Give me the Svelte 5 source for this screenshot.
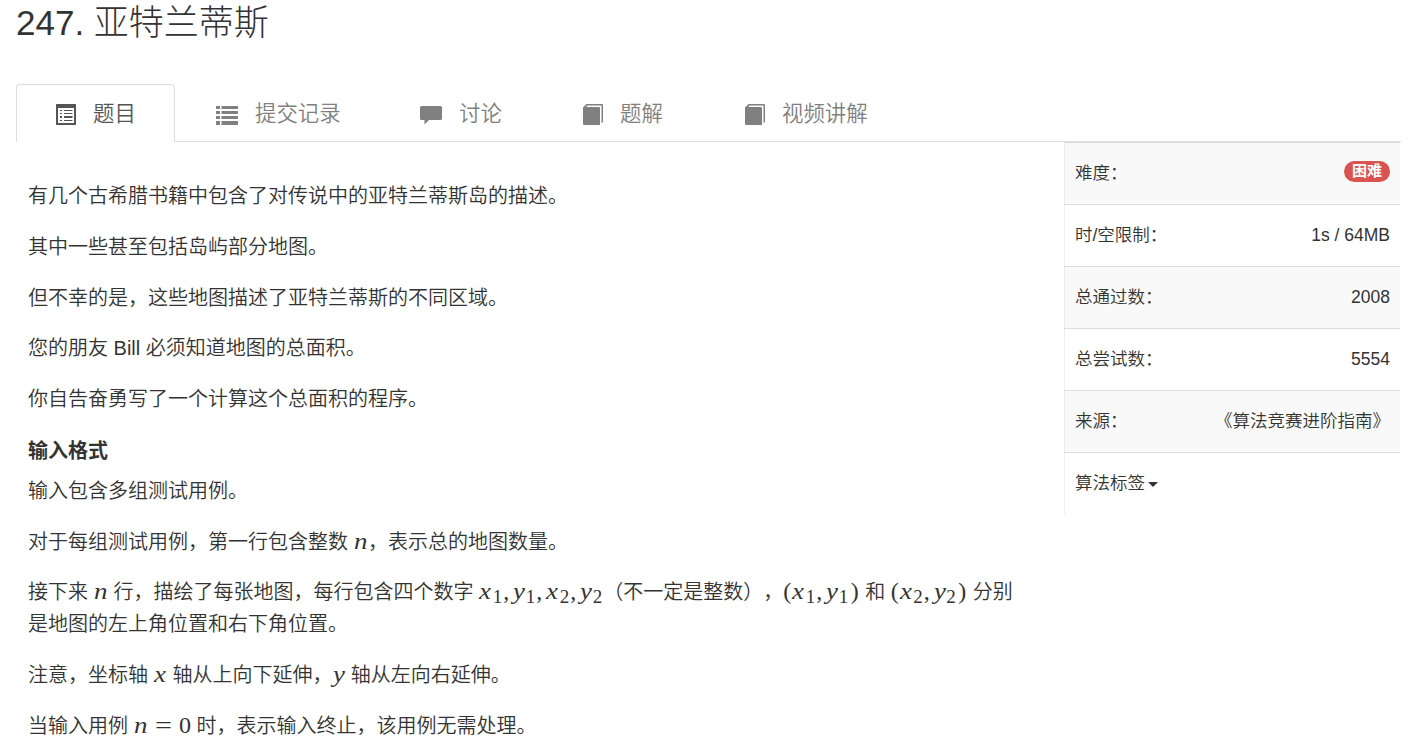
<script>
    const tabs = [
        { name: '题目', icon: 'list-alt', active: true },
        { name: '提交记录', icon: 'list' },
        { name: '讨论', icon: 'comment' },
        { name: '题解', icon: 'book' },
        { name: '视频讲解', icon: 'book' },
    ];

    const info = [
        { label: '难度：', badge: '困难' },
        { label: '时/空限制：', value: '1s / 64MB' },
        { label: '总通过数：', value: '2008' },
        { label: '总尝试数：', value: '5554' },
        { label: '来源：', value: '《算法竞赛进阶指南》' },
    ];
</script>

{#snippet pair(i)}<i class="x">x</i><sub>{i}</sub><span class="sep">,</span><i class="y">y</i><sub>{i}</sub>{/snippet}

<div class="page">
    <h1>247. 亚特兰蒂斯</h1>

    <ul class="nav-tabs">
        {#each tabs as tab}
            <li class={tab.icon} class:active={tab.active}>
                <a href="#top">
                    <svg width="22" height="22" viewBox="0 0 22 22" fill="currentColor">
                        {#if tab.icon === 'list-alt'}
                            <path fill-rule="evenodd" d="M.5 0h19q.5 0 .5.500v20q0 .5-.5.500H.5q-.5 0-.5-.500V.5Q0 0 .5 0zM2 4v15h16V4z" />
                            <path d="M4 6h2v1H4zM8 6h8.500v1H8zM4 9h2v1H4zM8 9h8.500v1H8zM4 12h2v2H4zM8 12h8.500v2H8zM4 16h2v1H4zM8 16h8.500v1H8z" />
                        {:else if tab.icon === 'list'}
                            <path d="M0 2h4v3H0zM5.500 2H22v3H5.500zM0 7h4v3H0zM5.500 7H22v3H5.500zM0 12h4v3H0zM5.500 12H22v3H5.500zM0 17h4v4H0zM5.500 17H22v4H5.500z" />
                        {:else if tab.icon === 'comment'}
                            <path d="M1.500 2h19q1.500 0 1.500 1.500v11q0 1.500-1.500 1.500H9l-4.500 4.500V16h-3Q0 16 0 14.500v-11Q0 2 1.500 2z" />
                        {:else}
                            <path d="M3.500 0H19q1 0 1 1v17l-1.500 1V1.500H4.500L3 3h13q1 0 1 1v17H1q-1 0-1-1V3.500z" />
                        {/if}
                    </svg>
                    <span>{tab.name}</span>
                </a>
            </li>
        {/each}
    </ul>

    <div class="row">
        <div class="content">
            <p>有几个古希腊书籍中包含了对传说中的亚特兰蒂斯岛的描述。</p>
            <p>其中一些甚至包括岛屿部分地图。</p>
            <p>但不幸的是，这些地图描述了亚特兰蒂斯的不同区域。</p>
            <p>您的朋友 Bill 必须知道地图的总面积。</p>
            <p>你自告奋勇写了一个计算这个总面积的程序。</p>
            <h4>输入格式</h4>
            <p>输入包含多组测试用例。</p>
            <p>对于每组测试用例，第一行包含整数 <span class="math"><i class="n">n</i></span>，表示总的地图数量。</p>
            <p>接下来 <span class="math"><i class="n">n</i></span> 行，描绘了每张地图，每行包含四个数字 <span class="math">{@render pair(1)}<span class="sep">,</span>{@render pair(2)}</span>（不一定是整数），<span class="math"><b>(</b>{@render pair(1)}<b class="close">)</b></span> 和 <span class="math"><b>(</b>{@render pair(2)}<b class="close">)</b></span> 分别<br>是地图的左上角位置和右下角位置。</p>
            <p>注意，坐标轴 <span class="math"><i class="x">x</i></span> 轴从上向下延伸，<span class="math"><i class="y">y</i></span> 轴从左向右延伸。</p>
            <p>当输入用例 <span class="math"><i class="n">n</i><span class="eq">=</span>0</span> 时，表示输入终止，该用例无需处理。</p>
        </div>

        <table>
            <tbody>
                {#each info as item}
                    <tr>
                        <td>{item.label}</td>
                        <td class="right">
                            {#if item.badge}
                                <span class="badge">{item.badge}</span>
                            {:else}
                                {item.value}
                            {/if}
                        </td>
                    </tr>
                {/each}
                <tr>
                    <td colspan="2">算法标签<span class="caret"></span></td>
                </tr>
            </tbody>
        </table>
    </div>
</div>

<style>
    :global(body) {
        margin: 0;
        background: #fff;
        overflow: hidden;
    }

    .page {
        height: 743px;
        padding: 0 16px;
        box-sizing: border-box;
        overflow: hidden;
        color: #333;
        font-family: "Liberation Sans", "Noto Sans CJK SC", sans-serif;
        font-weight: 350;
        text-spacing-trim: space-all;
    }

    h1 {
        margin: 0;
        height: 84px;
        line-height: 45px;
        font-size: 35px;
        font-weight: 300;
    }

    .nav-tabs {
        display: flex;
        height: 57px;
        margin: 0;
        padding: 0;
        list-style: none;
        border-bottom: 1px solid #ddd;
    }

    li {
        box-sizing: border-box;
        height: 58px;
        margin-right: 2px;
        padding-left: 39px;
        border: 1px solid transparent;
        border-bottom: 0;
        border-radius: 4px 4px 0 0;
    }
    li.active {
        width: 159px;
        background: #fff;
        border-color: #ddd;
    }
    li.list {
        width: 203px;
        padding-left: 38px;
    }
    li.comment {
        width: 160px;
        padding-left: 37px;
    }
    li.book {
        width: 160px;
        padding-left: 38px;
    }
    li.book:last-child {
        width: 204px;
    }

    a {
        display: flex;
        align-items: flex-start;
        color: #808080;
        font-size: 21.4px;
        line-height: 58px;
        text-decoration: none;
        white-space: nowrap;
    }
    .active a {
        color: #555;
    }
    a svg {
        flex: none;
        margin: 19px 17px 0 0;
    }
    .list-alt svg,
    .book svg {
        margin-right: 15px;
    }

    .row {
        display: flex;
        justify-content: space-between;
    }

    .content {
        width: 1030px;
        padding: 38px 0 0 12px;
        font-size: 20px;
        white-space: nowrap;
    }

    p {
        margin: 0 0 18.75px;
        line-height: 32px;
    }

    h4 {
        margin: 0 0 8px;
        padding-top: 2px;
        font-size: 20px;
        line-height: 31px;
        font-weight: bold;
    }

    .math {
        display: inline-flex;
        align-items: baseline;
        height: 24px;
        line-height: 24px;
        font-family: "Liberation Serif", serif;
        font-size: 24px;
        font-weight: 400;
    }
    .n,
    .x,
    .y {
        transform: scaleX(1.12);
        transform-origin: left;
    }
    .n {
        width: 14.5px;
    }
    .x {
        width: 13.5px;
    }
    .y {
        width: 12.5px;
    }
    sub {
        width: 10.5px;
        font-size: 19px;
        line-height: 1;
        transform: translateY(4px);
        vertical-align: baseline;
    }
    .sep {
        width: 10px;
    }
    .eq {
        width: 31px;
        text-align: center;
        transform: scaleX(1.25);
    }
    b {
        width: 9px;
        font-weight: 400;
    }
    .close {
        padding-left: 1.5px;
    }

    table {
        width: 336px;
        height: 372px;
        margin-right: 1px;
        border-collapse: collapse;
        border-left: 1px solid #eee;
        font-size: 17.5px;
    }
    tr:nth-child(odd) {
        background: #f9f9f9;
    }
    td {
        height: 61px;
        padding: 0 10px;
        border-top: 1px solid #ddd;
        line-height: 25px;
        white-space: nowrap;
    }
    .right {
        text-align: right;
    }

    .badge {
        display: inline-block;
        height: 21px;
        padding: 0 8px;
        border-radius: 11px;
        background: #d9534f;
        color: #fff;
        font-size: 15px;
        font-weight: bold;
        line-height: 20px;
        vertical-align: 3px;
    }

    .caret {
        display: inline-block;
        margin-left: 3px;
        border-top: 5px solid #333;
        border-left: 5px solid transparent;
        border-right: 5px solid transparent;
        vertical-align: middle;
    }
</style>
